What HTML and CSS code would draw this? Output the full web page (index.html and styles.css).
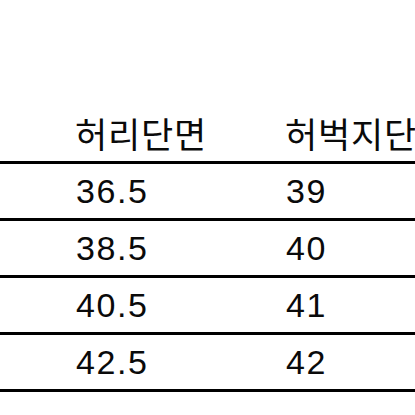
FILE: index.html
```html
<!DOCTYPE html>
<html lang="ko">
<head>
<meta charset="utf-8">
<link rel="stylesheet" href="styles.css">
</head>
<body>
<div class="page">
  <div class="table">
    <div class="row head">
      <div class="cell">허리단면</div>
      <div class="cell">허벅지단면</div>
    </div>
    <div class="row">
      <div class="cell num">36.5</div>
      <div class="cell num">39</div>
    </div>
    <div class="row">
      <div class="cell num">38.5</div>
      <div class="cell num">40</div>
    </div>
    <div class="row">
      <div class="cell num">40.5</div>
      <div class="cell num">41</div>
    </div>
    <div class="row">
      <div class="cell num">42.5</div>
      <div class="cell num">42</div>
    </div>
  </div>
</div>
</body>
</html>
```

FILE: styles.css
```css
html, body {
  margin: 0;
  padding: 0;
  background: #fff;
}

.page {
  width: 415px;
  height: 415px;
  overflow: hidden;
  font-family: "Liberation Sans", "Noto Sans CJK KR", sans-serif;
  color: #0a0a0a;
}

.table {
  padding-top: 104px;
  width: 700px;
}

.row {
  display: grid;
  grid-template-columns: 210px 210px;
  padding-left: 76px;
  height: 54px;
  align-items: center;
  border-bottom: 3px solid #000;
}

.row.head {
  height: 57px;
  border-bottom-width: 3px;
}

.cell {
  font-size: 33px;
  line-height: 38px;
  white-space: nowrap;
}

.head .cell {
  font-family: "Noto Sans CJK KR", sans-serif;
  font-size: 35px;
  letter-spacing: 0.8px;
  margin-left: -1px;
}

.num {
  font-size: 34px;
  letter-spacing: 1.6px;
}
```
